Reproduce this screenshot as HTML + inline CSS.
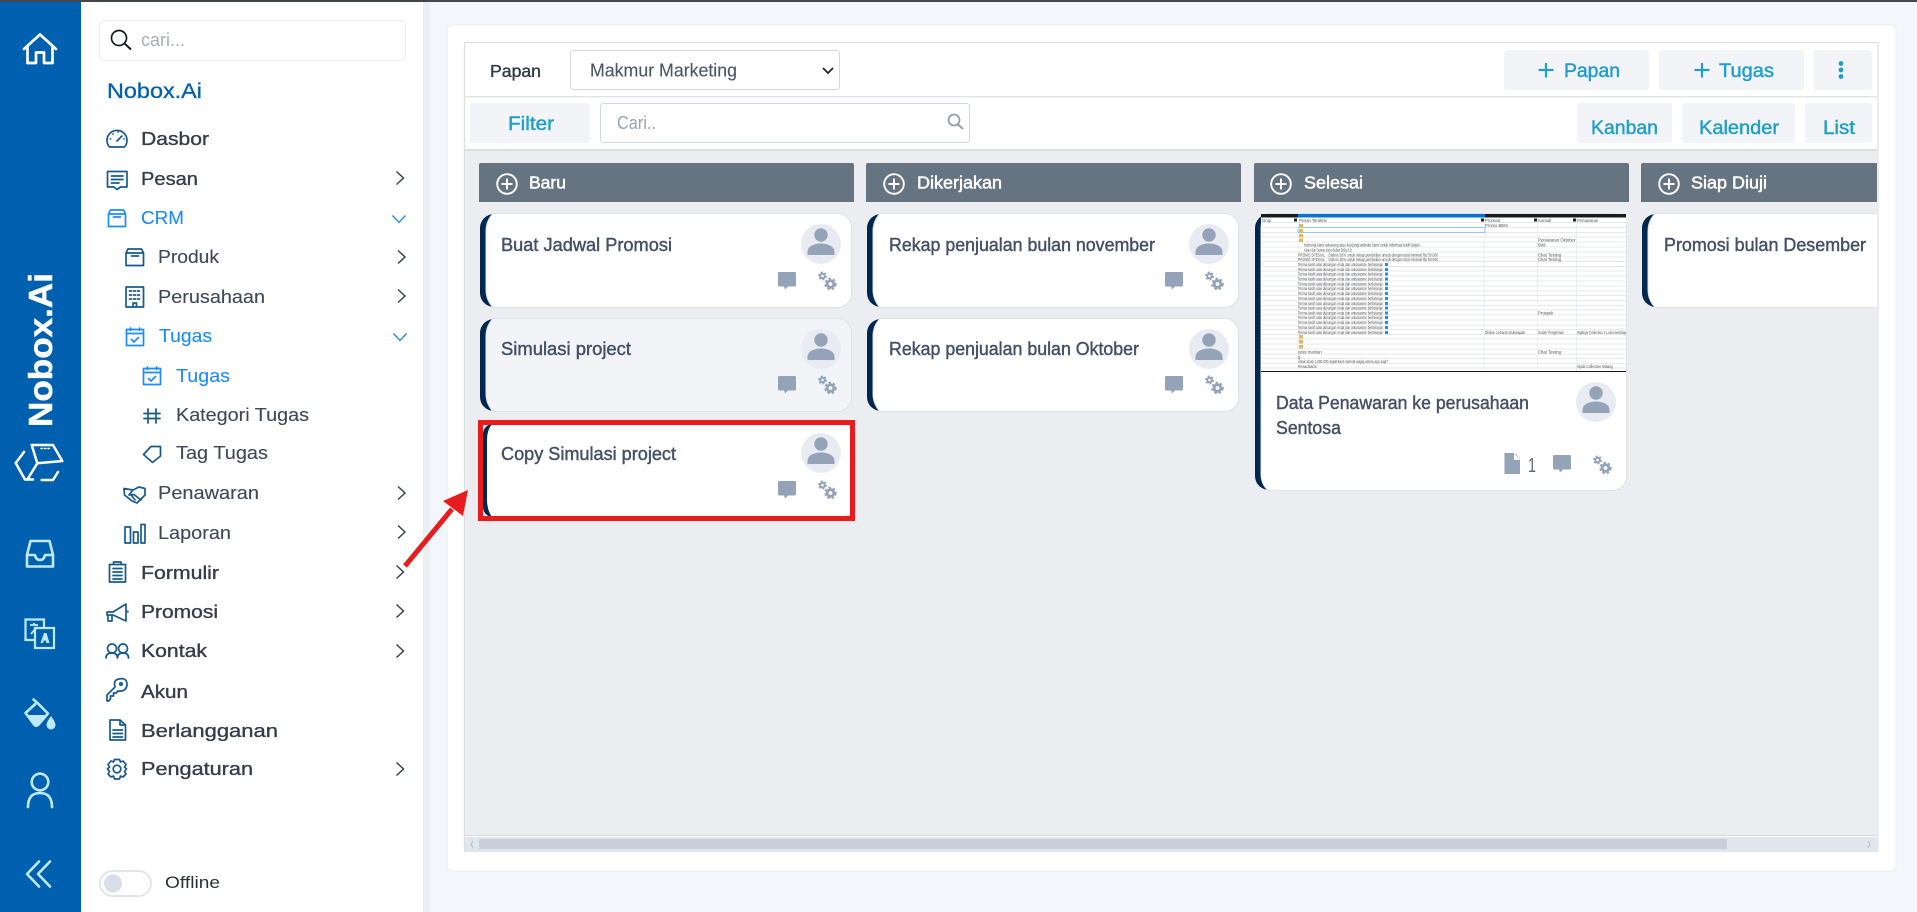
<!DOCTYPE html>
<html lang="id">
<head>
<meta charset="utf-8">
<title>Nobox.Ai</title>
<style>
html,body{margin:0;padding:0;width:1917px;height:912px;overflow:hidden;background:#f3f7fc}
svg{position:absolute;left:0;top:0;display:block}
text{font-family:"Liberation Sans",sans-serif;white-space:pre}
.m{fill:#363c48;stroke:#363c48;stroke-width:.35;font-size:18.5px}
.s{fill:#3f4857;stroke:#3f4857;stroke-width:.12;font-size:18px}
.a{fill:#1a8cff;stroke:#1a8cff;stroke-width:.12;font-size:18.5px}
.c{fill:#445066;stroke:#445066;stroke-width:.42;font-size:18px}
.h{fill:#fff;stroke:#fff;stroke-width:.5;font-size:17.5px}
.b{fill:#1f9fca;stroke:#1f9fca;stroke-width:.45;font-size:19px}
.x{font-size:4.2px;fill:#555}
.il{fill:none;stroke:#17598f;stroke-width:1.7;stroke-linecap:round;stroke-linejoin:round}
.ia{fill:none;stroke:#1a8cff;stroke-width:1.7;stroke-linecap:round;stroke-linejoin:round}
.ch{fill:none;stroke:#3b4450;stroke-width:1.5}
.cd{fill:none;stroke:#2d8be0;stroke-width:1.4}
.r{fill:none;stroke:#bfe9ff;stroke-width:2.6;stroke-linecap:round;stroke-linejoin:round}
.g{stroke:#e4e6e8;stroke-width:.6}
.g2{stroke:#dfe2e5;stroke-width:.8}
</style>
</head>
<body>
<svg width="1917" height="912" viewBox="0 0 1917 912" xmlns="http://www.w3.org/2000/svg">
<defs>
<g id="av"><circle r="20" fill="#e8ebf2"/><circle cx="0" cy="-9" r="6.7" fill="#94a3b8"/><path d="M-13.5 11V8C-13.5 2 -6 -.5 0 -.5S13.5 2 13.5 8V11Z" fill="#94a3b8"/></g>
<g id="cm"><path d="M1.5 0H16.5A1.5 1.5 0 0 1 18 1.5V13A1.5 1.5 0 0 1 16.5 14.500H10L7 17.500L6 14.500H1.500A1.500 1.500 0 0 1 0 13V1.500A1.500 1.500 0 0 1 1.500 0Z" fill="#94a3b8"/></g>
<g id="gr" fill="none" stroke="#94a3b8"><circle cx="4" cy="4" r="2.300" stroke-width="2"/><circle cx="4" cy="4" r="3.700" stroke-width="1.500" stroke-dasharray="2 1.880"/><circle cx="12" cy="12" r="3.300" stroke-width="2.800"/><circle cx="12" cy="12" r="5.300" stroke-width="1.800" stroke-dasharray="2.500 2.050"/></g>
<g id="pc" fill="none" stroke="#fff" stroke-width="1.900"><circle r="9.800"/><path d="M-5.500 0H5.500M0 -5.500V5.500"/></g>
<path id="cr" d="M0 -6.500L7 0L0 6.500" class="ch"/>
<path id="cdn" d="M-6.500 -3.500L0 3.500L6.500 -3.500" class="cd"/>
<g id="task" class="ia"><rect x="-8.500" y="-7.500" width="17" height="16"/><path d="M-8.500 -3.500H8.500M-4.500 -9V-6.500M4.500 -9V-6.500M-3.500 2.500L-1 5L3.500 .5"/></g>
<clipPath id="shot"><path d="M1261 214H1626V372H1261Z"/></clipPath>
<clipPath id="board"><rect x="465" y="150" width="1412" height="686"/></clipPath>
</defs>

<!-- page -->
<rect width="1917" height="912" fill="#f3f7fc"/>
<rect x="423" y="0" width="7" height="912" fill="#ebeff4"/>
<rect x="81" y="0" width="342" height="912" fill="#fff"/>
<rect x="0" y="0" width="81" height="912" fill="#0060b0"/>
<rect x="0" y="0" width="1917" height="2" fill="#44474a"/>

<!-- rail -->
<g fill="none" stroke="#fff" stroke-width="2.700" stroke-linejoin="round" stroke-linecap="round">
<path d="M24 49L40 34.500L56 49M27.500 46.500V63H36V52.500H44V63H52.500V46.500"/>
</g>
<text transform="translate(52 427) rotate(-90)" font-size="33" font-weight="bold" fill="#fff" stroke="#fff" stroke-width=".5" textLength="154" lengthAdjust="spacingAndGlyphs">Nobox.Ai</text>
<g fill="none" stroke="#fff" stroke-width="2.500" stroke-linecap="round" stroke-linejoin="round">
<path d="M24 452L15.700 463L25 479.500H33"/>
<path d="M31.700 445H53L62.300 461L37.300 463.300L31.700 445"/>
<path d="M37.300 463.300L27.300 479.500"/>
<path d="M41.700 480H53L58 472"/>
<path d="M41 448.500h1.500M44.500 448.500h1.500M48 448.500h1.500" stroke-width="1.400"/>
</g>
<path d="M30.500 541H49.500L53 555V566.500H27V555ZM27 555H35Q36 560 40 560Q44 560 45 555H53" class="r"/>
<g fill="none" stroke="#bfe9ff" stroke-width="2.200">
<path d="M34 640H25.500V619.500H44V628"/>
<rect x="35" y="628" width="19" height="20" />
</g>
<path d="M30 625H38M34 623V625M31 634L37 627" fill="none" stroke="#bfe9ff" stroke-width="1.800"/>
<path d="M44.500 643L48 633L50.500 633L53.500 643H50.500L49.500 640.500H48L47 643Z" fill="#bfe9ff" transform="translate(-4 0)"/>
<path d="M25.500 713L37 702.500L48 713.500L38 725Q36 726.500 34.500 725Z" class="r" stroke-width="2.400"/>
<path d="M28 715H46L38 724.500Q36 725.500 35 724.500Z" fill="#bfe9ff"/>
<path d="M33.500 699.500L37 702.500" class="r"/>
<path d="M51 716Q55.500 722 55.500 725A4.500 4.500 0 0 1 46.500 725Q46.500 722 51 716Z" fill="#bfe9ff"/>
<circle cx="40" cy="782" r="8.300" class="r"/>
<path d="M28 807Q28 793 40 793T52 807" class="r"/>
<path d="M39 861.500L27 874L39 886.500M50 861.500L38 874L50 886.500" class="r"/>

<!-- sidebar top -->
<rect x="99.500" y="20.500" width="306" height="40" rx="5" fill="#fff" stroke="#e9ebee"/>
<circle cx="119" cy="38" r="7.500" fill="none" stroke="#15181d" stroke-width="1.700"/>
<path d="M124.500 43.500L130.500 49" stroke="#15181d" stroke-width="1.900" stroke-linecap="round"/>
<text x="141" y="46" font-size="18" fill="#a7aeb9" textLength="44" lengthAdjust="spacingAndGlyphs">cari...</text>
<text x="107" y="98" font-size="21" fill="#0060b0" stroke="#0060b0" stroke-width=".3" textLength="95" lengthAdjust="spacingAndGlyphs">Nobox.Ai</text>

<!-- menu text -->
<text class="m" x="141" y="145" textLength="68" lengthAdjust="spacingAndGlyphs">Dasbor</text>
<text class="m" x="141" y="185" textLength="57" lengthAdjust="spacingAndGlyphs">Pesan</text>
<text class="a" x="141" y="224" textLength="43" lengthAdjust="spacingAndGlyphs">CRM</text>
<text class="s" x="158" y="263" textLength="61" lengthAdjust="spacingAndGlyphs">Produk</text>
<text class="s" x="158" y="303" textLength="107" lengthAdjust="spacingAndGlyphs">Perusahaan</text>
<text class="a" x="159" y="342" textLength="53" lengthAdjust="spacingAndGlyphs">Tugas</text>
<text class="a" x="176" y="382" textLength="54" lengthAdjust="spacingAndGlyphs">Tugas</text>
<text class="s" x="176" y="421" textLength="133" lengthAdjust="spacingAndGlyphs">Kategori Tugas</text>
<text class="s" x="176" y="459" textLength="92" lengthAdjust="spacingAndGlyphs">Tag Tugas</text>
<text class="s" x="158" y="499" textLength="101" lengthAdjust="spacingAndGlyphs">Penawaran</text>
<text class="s" x="158" y="539" textLength="73" lengthAdjust="spacingAndGlyphs">Laporan</text>
<text class="m" x="141" y="579" textLength="78" lengthAdjust="spacingAndGlyphs">Formulir</text>
<text class="m" x="141" y="618" textLength="77" lengthAdjust="spacingAndGlyphs">Promosi</text>
<text class="m" x="141" y="657" textLength="66" lengthAdjust="spacingAndGlyphs">Kontak</text>
<text class="m" x="141" y="698" textLength="47" lengthAdjust="spacingAndGlyphs">Akun</text>
<text class="m" x="141" y="737" textLength="137" lengthAdjust="spacingAndGlyphs">Berlangganan</text>
<text class="m" x="141" y="775" textLength="112" lengthAdjust="spacingAndGlyphs">Pengaturan</text>

<!-- menu icons -->
<g class="il">
<path d="M109.500 147A10 10 0 1 1 124.500 147Z"/><path d="M117 141L122 136M110.500 139h.1M113 134h.1M118 132h.1M124 139h.1"/>
<path d="M107.500 171.500H127V187H120.500L117 189.500L114 187H107.500ZM111.500 176H123M111.500 179.500H123M111.500 183H119"/>
</g>
<g class="ia"><path d="M108.500 214H125.500V226.500H108.500ZM108.500 214L110.500 210H123.500L125.500 214M113.500 217H120.500"/></g>
<g class="il">
<path d="M126 253H143.500V265.500H126ZM126 253L128 249H141.500L143.500 253M131.500 256H138.500"/>
<path d="M126 287H143.500V307H126ZM129.500 291h2M133.500 291h2M137.500 291h2M129.500 295h2M133.500 295h2M137.500 295h2M129.500 299h2M133.500 299h2M137.500 299h2M133 307V303H136.500V307"/>
</g>
<use href="#task" x="135" y="337"/>
<use href="#task" x="152" y="376"/>
<g class="il">
<path d="M148 409V423M156 409V423M144 413.500H160M144 418.500H160"/>
<path d="M143.500 454.500L151 446.500H160.500V456L152.500 462.500Z"/>
<path d="M124 488.500L133 490L139 487L145 488.500V495L137 503L132 501L124.500 495ZM133 490L129 495L134 494.500L141 500M135 500L132 496"/>
<path d="M125 527H130.500V543H125ZM133.500 532H138V543H133.500ZM141 524.500H145V543H141Z"/>
<path d="M109.500 564.500H125.500V582H109.500ZM113.500 564.500V562H121V564.500H113.500M113 568.500H122M113 572H122M113 575.500H122M113 579H122"/>
<path d="M107 612H113L126 604V621L113 615H107ZM108 615V621H112V615M127 611.500H128"/>
<circle cx="112" cy="648.500" r="4.500"/><circle cx="123" cy="648.500" r="4.500"/>
<path d="M106 658Q106 653 112 653Q117.500 653 117.500 658M117.500 658Q117.500 653 123 653Q128.500 653 128.500 658"/>
<path d="M107 701V695L115 687Q113 680 119 679Q127 677 127 685Q126 692 118 691L116 693H113.500V696H110.500V699L108.500 701Z"/>
<circle cx="121" cy="684" r="1.200"/>
<path d="M110 720H120L125.500 725V740H110ZM120 720V725H125.500M113 730H122.500M113 733.500H122.500M113 737H122.500"/>
<circle cx="117" cy="769" r="3.800"/>
<path d="M114.500 759.500L119.500 759.500L120.500 762L123 761L126 764.500L124.500 767L126.500 769L124.500 771.500L126 774L123 777L120.500 776L119.500 779L114.500 779L113.500 776L111 777L108 774L109.500 771.500L107.500 769L109.500 767L108 764.500L111 761L113.500 762Z"/>
</g>
<use href="#cr" x="396.500" y="178"/>
<use href="#cdn" x="399" y="219"/>
<use href="#cr" x="398" y="257"/>
<use href="#cr" x="398" y="296"/>
<use href="#cdn" x="400" y="337"/>
<use href="#cr" x="398" y="493"/>
<use href="#cr" x="398" y="532"/>
<use href="#cr" x="396.500" y="572"/>
<use href="#cr" x="396.500" y="611"/>
<use href="#cr" x="396.500" y="651"/>
<use href="#cr" x="396.500" y="769"/>

<!-- toggle -->
<rect x="100" y="871" width="51" height="25" rx="12.500" fill="#fff" stroke="#e1e5ec" stroke-width="2"/>
<circle cx="113" cy="883.500" r="9" fill="#d8deea"/>
<text x="165" y="888" font-size="17" fill="#2d3238" textLength="55" lengthAdjust="spacingAndGlyphs">Offline</text>

<!-- panel -->
<rect x="447" y="25" width="1449" height="846" rx="5" fill="#fff" stroke="#eceef1"/>
<rect x="464.500" y="42.500" width="1413.500" height="809" fill="#fff" stroke="#dcdee1" stroke-width="1.200"/>
<rect x="465" y="96" width="1412" height="1.500" fill="#e2e4e7"/>
<rect x="465" y="149" width="1412" height="2" fill="#dcdee2"/>
<rect x="465" y="151" width="1412" height="684" fill="#ebedf1"/>
<rect x="465" y="835" width="1412" height="1" fill="#d5d7da"/>
<rect x="465" y="837" width="1412" height="15" fill="#e0e6ee"/>
<rect x="479" y="839" width="1248" height="10" fill="#c8cfda"/>
<path d="M473 841L471 844.500L473 848M1868 841L1870 844.500L1868 848" fill="none" stroke="#b9c0ca" stroke-width="1.200"/>

<!-- toolbar 1 -->
<text x="490" y="77" font-size="17.500" fill="#2f3844" stroke="#2f3844" stroke-width=".35" textLength="51" lengthAdjust="spacingAndGlyphs">Papan</text>
<rect x="570.500" y="50.500" width="269" height="39" rx="3" fill="#fff" stroke="#d6d8dc"/>
<text x="590" y="76.500" font-size="18" fill="#4a5568" stroke="#4a5568" stroke-width=".12" textLength="147" lengthAdjust="spacingAndGlyphs">Makmur Marketing</text>
<path d="M823 68L828 73L833 68" fill="none" stroke="#222" stroke-width="1.800"/>
<rect x="1504" y="50" width="145" height="40" rx="3" fill="#f3f4f8"/>
<rect x="1659" y="50" width="145" height="40" rx="3" fill="#f3f4f8"/>
<rect x="1814" y="50" width="58" height="40" rx="3" fill="#f3f4f8"/>
<path d="M1546 63V77.500M1538.500 70H1553.500M1702 63V77.500M1694.500 70H1709.500" stroke="#1f9fca" stroke-width="2.200"/>
<text class="b" x="1564" y="77" textLength="56" lengthAdjust="spacingAndGlyphs">Papan</text>
<text class="b" x="1719" y="77" textLength="55" lengthAdjust="spacingAndGlyphs">Tugas</text>
<circle cx="1841" cy="63.500" r="2.400" fill="#1f9fca"/><circle cx="1841" cy="70" r="2.400" fill="#1f9fca"/><circle cx="1841" cy="76.500" r="2.400" fill="#1f9fca"/>

<!-- toolbar 2 -->
<rect x="470" y="103" width="120" height="40" rx="3" fill="#f3f4f8"/>
<text class="b" x="508" y="130" textLength="46" lengthAdjust="spacingAndGlyphs">Filter</text>
<rect x="600.500" y="103.500" width="369" height="39" rx="3" fill="#fff" stroke="#cdd8e8"/>
<text x="617" y="129" font-size="18" fill="#98a4b4" textLength="39" lengthAdjust="spacingAndGlyphs">Cari..</text>
<circle cx="954" cy="120" r="5.500" fill="none" stroke="#8f9bab" stroke-width="1.700"/>
<path d="M958 124.500L963 129" stroke="#8f9bab" stroke-width="2"/>
<rect x="1577" y="103" width="95" height="40" rx="3" fill="#f3f4f8"/>
<rect x="1682" y="103" width="113" height="40" rx="3" fill="#f3f4f8"/>
<rect x="1805" y="103" width="67" height="40" rx="3" fill="#f3f4f8"/>
<text class="b" x="1591" y="134" textLength="67" lengthAdjust="spacingAndGlyphs">Kanban</text>
<text class="b" x="1699" y="134" textLength="80" lengthAdjust="spacingAndGlyphs">Kalender</text>
<text class="b" x="1823" y="134" textLength="32" lengthAdjust="spacingAndGlyphs">List</text>

<g clip-path="url(#board)">
<!-- column headers -->
<path d="M479 165a2 2 0 0 1 2-2H852a2 2 0 0 1 2 2V202H479Z" fill="#667482"/>
<path d="M866 165a2 2 0 0 1 2-2H1239a2 2 0 0 1 2 2V202H866Z" fill="#667482"/>
<path d="M1254 165a2 2 0 0 1 2-2H1627a2 2 0 0 1 2 2V202H1254Z" fill="#667482"/>
<path d="M1641 165a2 2 0 0 1 2-2H1900V202H1641Z" fill="#667482"/>
<use href="#pc" x="507" y="184"/><use href="#pc" x="894" y="184"/><use href="#pc" x="1281" y="184"/><use href="#pc" x="1669" y="184"/>
<text class="h" x="529" y="188.500" textLength="37" lengthAdjust="spacingAndGlyphs">Baru</text>
<text class="h" x="917" y="188.500" textLength="85" lengthAdjust="spacingAndGlyphs">Dikerjakan</text>
<text class="h" x="1304" y="188.500" textLength="59" lengthAdjust="spacingAndGlyphs">Selesai</text>
<text class="h" x="1691" y="188.500" textLength="76" lengthAdjust="spacingAndGlyphs">Siap Diuji</text>

<!-- cards: navy then white -->
<rect x="480" y="214" width="40" height="93" rx="14" fill="#00274f"/>
<path d="M493 213.500H837A14 14 0 0 1 851.500 228V293A14 14 0 0 1 837 307.500H493Q486 300 486 290V231Q486 221 493 213.500Z" fill="#fff" stroke="#dfe1e6"/>
<text class="c" x="501" y="251" textLength="171" lengthAdjust="spacingAndGlyphs">Buat Jadwal Promosi</text>
<use href="#av" x="821" y="244"/><use href="#cm" x="778" y="272"/><use href="#gr" x="818.500" y="272"/>

<rect x="480" y="319" width="40" height="92" rx="14" fill="#00274f"/>
<path d="M493 318.500H837A14 14 0 0 1 851.500 333V397A14 14 0 0 1 837 411.500H493Q486 404 486 394V336Q486 326 493 318.500Z" fill="#f2f4f8" stroke="#dfe1e6"/>
<text class="c" x="501" y="355" textLength="130" lengthAdjust="spacingAndGlyphs">Simulasi project</text>
<use href="#av" x="821" y="349"/><use href="#cm" x="778" y="376"/><use href="#gr" x="818.500" y="376"/>

<rect x="483" y="424" width="40" height="93" rx="10" fill="#00274f"/>
<path d="M492 424H852V505A12 12 0 0 1 840 517H492Q487 510 487 500V440Q487 430 492 424Z" fill="#fff"/>
<text class="c" x="501" y="460" textLength="175" lengthAdjust="spacingAndGlyphs">Copy Simulasi project</text>
<use href="#av" x="821" y="453"/><use href="#cm" x="778" y="481"/><use href="#gr" x="818.500" y="481"/>

<rect x="867" y="214" width="40" height="93" rx="14" fill="#00274f"/>
<path d="M880 213.500H1224A14 14 0 0 1 1238.500 228V293A14 14 0 0 1 1224 307.500H880Q873 300 873 290V231Q873 221 880 213.500Z" fill="#fff" stroke="#dfe1e6"/>
<text class="c" x="889" y="251" textLength="266" lengthAdjust="spacingAndGlyphs">Rekap penjualan bulan november</text>
<use href="#av" x="1209" y="244"/><use href="#cm" x="1165" y="272"/><use href="#gr" x="1205.500" y="272"/>

<rect x="867" y="319" width="40" height="92" rx="14" fill="#00274f"/>
<path d="M880 318.500H1224A14 14 0 0 1 1238.500 333V397A14 14 0 0 1 1224 411.500H880Q873 404 873 394V336Q873 326 880 318.500Z" fill="#fff" stroke="#dfe1e6"/>
<text class="c" x="889" y="355" textLength="250" lengthAdjust="spacingAndGlyphs">Rekap penjualan bulan Oktober</text>
<use href="#av" x="1209" y="349"/><use href="#cm" x="1165" y="376"/><use href="#gr" x="1205.500" y="376"/>

<rect x="1255" y="214" width="40" height="276" rx="14" fill="#00274f"/>
<path d="M1266 213.500H1612A14 14 0 0 1 1626.500 228V476A14 14 0 0 1 1612 490.500H1268Q1261 484 1261 474V228Q1261 220 1266 213.500Z" fill="#fff" stroke="#dfe1e6"/>

<!-- screenshot thumbnail -->
<g clip-path="url(#shot)">
<rect x="1261" y="214" width="365" height="158" fill="#fff"/>
<rect x="1261" y="214" width="365" height="3.500" fill="#1b1b1b"/>
<rect x="1298" y="214" width="187" height="3.500" fill="#0a72d0"/>
<path class="g2" d="M1261 222.500H1626M1261 227.500H1626M1261 232.500H1626M1261 237H1626M1261 242H1626M1261 247H1626M1261 252H1626M1261 257H1626M1261 261.500H1626M1261 266.500H1626M1261 271H1626M1261 276H1626M1261 281H1626M1261 286H1626M1261 291H1626M1261 295.500H1626M1261 300.500H1626M1261 305.500H1626M1261 310H1626M1261 315H1626M1261 320H1626M1261 325H1626M1261 329.500H1626M1261 334.500H1626M1261 339H1626M1261 344H1626M1261 349H1626M1261 354H1626M1261 358.500H1626M1261 363.500H1626M1261 368H1626"/>
<path class="g" d="M1298 218V372M1484.500 218V372M1537.500 218V372M1576.500 218V372"/>
<rect x="1298" y="227.500" width="187" height="5" fill="none" stroke="#7cc0ee" stroke-width=".8"/>
<rect x="1294" y="218.500" width="3" height="3" fill="#222"/><rect x="1481" y="218.500" width="3" height="3" fill="#222"/><rect x="1534" y="218.500" width="3" height="3" fill="#222"/><rect x="1573" y="218.500" width="3" height="3" fill="#222"/>
<text class="x" x="1262" y="222">Grup</text><text class="x" x="1299" y="222">Pesan Terakhir</text><text class="x" x="1485" y="222">Promosi</text><text class="x" x="1538" y="222">Kontak</text><text class="x" x="1577" y="222">Penawaran</text>
<text class="x" x="1485" y="227">Promo BBM</text>
<rect x="1299" y="224" width="4" height="3.500" fill="#e9b460"/><rect x="1299" y="229" width="4" height="3.500" fill="#e9b460"/><rect x="1299" y="234" width="4" height="3.500" fill="#e9b460"/><rect x="1299" y="238.500" width="4" height="3.500" fill="#e9b460"/>
<text class="x" x="1538" y="241.500">Penawaran Oktober</text>
<text class="x" x="1304" y="246.500" textLength="116" lengthAdjust="spacingAndGlyphs">Hubungi kami sekarang atau kunjungi website kami untuk informasi lebih lanjut!</text><text class="x" x="1538" y="246.500">Bird</text>
<text class="x" x="1304" y="251.500" textLength="48" lengthAdjust="spacingAndGlyphs">Kaset dan Sarana Kaca Bebas 300g 0.1r</text>
<text class="x" x="1298" y="256.500" textLength="140" lengthAdjust="spacingAndGlyphs">PROMO SPESIAL    Diskon 20% untuk setiap pembelian unsub dengan total minimal Rp 50.000</text><text class="x" x="1538" y="256.500">Chat Testing</text>
<text class="x" x="1298" y="261" textLength="140" lengthAdjust="spacingAndGlyphs">PROMO SPESIAL    Diskon 20% untuk setiap pembelian unsub dengan total minimal Rp 50.000</text><text class="x" x="1538" y="261">Chat Testing</text>
<g fill="#333">
<text class="x" x="1298" y="266" textLength="85" lengthAdjust="spacingAndGlyphs">Terima kasih atas dukungan Anda dan antusiasme berbelanja!</text>
<text class="x" x="1298" y="271" textLength="85" lengthAdjust="spacingAndGlyphs">Terima kasih atas dukungan Anda dan antusiasme berbelanja!</text>
<text class="x" x="1298" y="275.500" textLength="85" lengthAdjust="spacingAndGlyphs">Terima kasih atas dukungan Anda dan antusiasme berbelanja!</text>
<text class="x" x="1298" y="280.500" textLength="85" lengthAdjust="spacingAndGlyphs">Terima kasih atas dukungan Anda dan antusiasme berbelanja!</text>
<text class="x" x="1298" y="285.500" textLength="85" lengthAdjust="spacingAndGlyphs">Terima kasih atas dukungan Anda dan antusiasme berbelanja!</text>
<text class="x" x="1298" y="290" textLength="85" lengthAdjust="spacingAndGlyphs">Terima kasih atas dukungan Anda dan antusiasme berbelanja!</text>
<text class="x" x="1298" y="295" textLength="85" lengthAdjust="spacingAndGlyphs">Terima kasih atas dukungan Anda dan antusiasme berbelanja!</text>
<text class="x" x="1298" y="300" textLength="85" lengthAdjust="spacingAndGlyphs">Terima kasih atas dukungan Anda dan antusiasme berbelanja!</text>
<text class="x" x="1298" y="305" textLength="85" lengthAdjust="spacingAndGlyphs">Terima kasih atas dukungan Anda dan antusiasme berbelanja!</text>
<text class="x" x="1298" y="309.500" textLength="85" lengthAdjust="spacingAndGlyphs">Terima kasih atas dukungan Anda dan antusiasme berbelanja!</text>
<text class="x" x="1298" y="314.500" textLength="85" lengthAdjust="spacingAndGlyphs">Terima kasih atas dukungan Anda dan antusiasme berbelanja!</text>
<text class="x" x="1298" y="319" textLength="85" lengthAdjust="spacingAndGlyphs">Terima kasih atas dukungan Anda dan antusiasme berbelanja!</text>
<text class="x" x="1298" y="324" textLength="85" lengthAdjust="spacingAndGlyphs">Terima kasih atas dukungan Anda dan antusiasme berbelanja!</text>
<text class="x" x="1298" y="329" textLength="85" lengthAdjust="spacingAndGlyphs">Terima kasih atas dukungan Anda dan antusiasme berbelanja!</text>
<text class="x" x="1298" y="334" textLength="85" lengthAdjust="spacingAndGlyphs">Terima kasih atas dukungan Anda dan antusiasme berbelanja!</text>
</g>
<g fill="#1f8fe0"><rect x="1385" y="263" width="3" height="3"/><rect x="1385" y="268" width="3" height="3"/><rect x="1385" y="272.500" width="3" height="3"/><rect x="1385" y="277.500" width="3" height="3"/><rect x="1385" y="282.500" width="3" height="3"/><rect x="1385" y="287" width="3" height="3"/><rect x="1385" y="292" width="3" height="3"/><rect x="1385" y="297" width="3" height="3"/><rect x="1385" y="302" width="3" height="3"/><rect x="1385" y="306.500" width="3" height="3"/><rect x="1385" y="311.500" width="3" height="3"/><rect x="1385" y="316" width="3" height="3"/><rect x="1385" y="321" width="3" height="3"/><rect x="1385" y="326" width="3" height="3"/><rect x="1385" y="331" width="3" height="3"/></g>
<text class="x" x="1538" y="314.500">Prospek</text>
<text class="x" x="1485" y="334" textLength="40" lengthAdjust="spacingAndGlyphs">Diskon Lebaran Bukalapak</text><text class="x" x="1538" y="334" textLength="26" lengthAdjust="spacingAndGlyphs">Sudah Pengiriman</text><text class="x" x="1577" y="334" textLength="50" lengthAdjust="spacingAndGlyphs">Hijabiya Collection 3 Lusin bertahap</text>
<rect x="1299" y="335" width="4" height="3.500" fill="#e9b460"/><rect x="1299" y="340" width="4" height="3.500" fill="#e9b460"/><rect x="1299" y="345" width="4" height="3.500" fill="#e9b460"/>
<text class="x" x="1298" y="353.500">yess maman</text><text class="x" x="1538" y="353.500">Chat Testing</text>
<text class="x" x="1298" y="358.500">g</text>
<text class="x" x="1298" y="363" textLength="90" lengthAdjust="spacingAndGlyphs">untuk akusi 1.500.000 dapat kaos samsat wajag warna apa saja?</text>
<text class="x" x="1298" y="368">#eradrack</text><text class="x" x="1577" y="368" textLength="36" lengthAdjust="spacingAndGlyphs">Hijabi Collection Malang</text>
<rect x="1261" y="371" width="365" height="1.500" fill="#1a1a1a"/>
</g>
<text class="c" x="1276" y="409" textLength="253" lengthAdjust="spacingAndGlyphs">Data Penawaran ke perusahaan</text>
<text class="c" x="1276" y="434" textLength="65" lengthAdjust="spacingAndGlyphs">Sentosa</text>
<use href="#av" x="1596" y="402"/>
<path d="M1504.500 453H1514.500L1520 459V474H1504.500ZM1514 453.500V459.500H1520Z" fill="#94a3b8"/>
<path d="M1514.500 453V459.500H1520" fill="none" stroke="#fff" stroke-width=".8"/>
<text x="1528" y="472" font-size="20" fill="#58677b" textLength="8" lengthAdjust="spacingAndGlyphs">1</text>
<use href="#cm" x="1553" y="455"/><use href="#gr" x="1593.500" y="456"/>

<rect x="1642" y="214" width="40" height="93" rx="14" fill="#00274f"/>
<path d="M1655 213.500H1900V307.500H1655Q1648 300 1648 290V231Q1648 221 1655 213.500Z" fill="#fff" stroke="#dfe1e6"/>
<text class="c" x="1664" y="251" textLength="202" lengthAdjust="spacingAndGlyphs">Promosi bulan Desember</text>
</g>

<!-- annotation -->
<rect x="480.500" y="422.500" width="372" height="96" fill="none" stroke="#e81c1c" stroke-width="5"/>
<path d="M405 566L452 509" stroke="#e81c1c" stroke-width="5"/>
<path d="M468 490L443 501L463 516Z" fill="#e81c1c"/>
</svg>
</body>
</html>
